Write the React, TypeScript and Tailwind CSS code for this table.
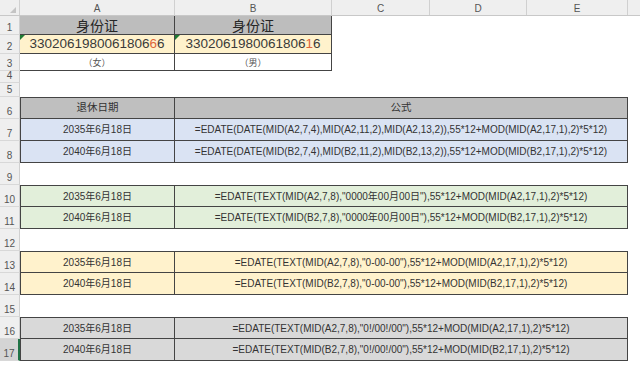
const formulas = [
  {
    bg: "bg-[#dae3f3]",
    rows: [
      { n: 7, date: "2035年6月18日", f: "=EDATE(DATE(MID(A2,7,4),MID(A2,11,2),MID(A2,13,2)),55*12+MOD(MID(A2,17,1),2)*5*12)" },
      { n: 8, date: "2040年6月18日", f: "=EDATE(DATE(MID(B2,7,4),MID(B2,11,2),MID(B2,13,2)),55*12+MOD(MID(B2,17,1),2)*5*12)" },
    ],
  },
  {
    bg: "bg-[#e2efda]",
    rows: [
      { n: 10, date: "2035年6月18日", f: '=EDATE(TEXT(MID(A2,7,8),"0000年00月00日"),55*12+MOD(MID(A2,17,1),2)*5*12)' },
      { n: 11, date: "2040年6月18日", f: '=EDATE(TEXT(MID(B2,7,8),"0000年00月00日"),55*12+MOD(MID(B2,17,1),2)*5*12)' },
    ],
  },
  {
    bg: "bg-[#fff2cc]",
    rows: [
      { n: 13, date: "2035年6月18日", f: '=EDATE(TEXT(MID(A2,7,8),"0-00-00"),55*12+MOD(MID(A2,17,1),2)*5*12)' },
      { n: 14, date: "2040年6月18日", f: '=EDATE(TEXT(MID(B2,7,8),"0-00-00"),55*12+MOD(MID(B2,17,1),2)*5*12)' },
    ],
  },
  {
    bg: "bg-[#d9d9d9]",
    rows: [
      { n: 16, date: "2035年6月18日", f: '=EDATE(TEXT(MID(A2,7,8),"0!/00!/00"),55*12+MOD(MID(A2,17,1),2)*5*12)' },
      { n: 17, date: "2040年6月18日", f: '=EDATE(TEXT(MID(B2,7,8),"0!/00!/00"),55*12+MOD(MID(B2,17,1),2)*5*12)' },
    ],
  },
];

const RowNum = ({ n, active }: { n: number; active?: boolean }) => (
  <div
    className={
      "w-[20px] shrink-0 flex items-end justify-center pb-[1px] leading-none text-[10px] text-[#555] border-b border-[#d8d8d8] " +
      (active ? "bg-[#d4d4d4] border-r-2 border-r-[#217346]" : "bg-[#efefef] border-r border-r-[#d0d0d0]")
    }
  >
    {n}
  </div>
);

const IdNumber = ({ head, hl, tail }: { head: string; hl: string; tail: string }) => (
  <span>
    {head}
    <span className="text-[#e0663a]">{hl}</span>
    {tail}
  </span>
);

const Spacer = ({ n, h }: { n: number; h: string }) => (
  <div className={"flex " + h}>
    <RowNum n={n} />
    <div className="flex-1" />
  </div>
);

export default function App() {
  const gaps = [9, 12, 15];
  return (
    <div className="w-[640px] h-[365px] overflow-hidden bg-white text-[#333] font-['Liberation_Sans','Noto_Sans_CJK_SC',sans-serif]">
      {/* column headers */}
      <div className="flex h-[16px] bg-[#efefef] border-b border-[#c8c8c8] text-[10px] text-[#555] leading-none">
        <div className="w-[20px] shrink-0 border-r border-[#d0d0d0] relative">
          <div className="absolute right-[3px] bottom-[2px] w-0 h-0 border-l-[6px] border-l-transparent border-b-[6px] border-b-[#c4c4c4]" />
        </div>
        {[
          ["A", "w-[155px]"],
          ["B", "w-[157px]"],
          ["C", "w-[98px]"],
          ["D", "w-[97px]"],
          ["E", "w-[101px]"],
        ].map(([l, w]) => (
          <div key={l} className={w + " shrink-0 border-r border-[#d0d0d0] flex items-center justify-center pt-[2px]"}>
            {l}
          </div>
        ))}
        <div className="flex-1" />
      </div>

      {/* rows 1-3 */}
      <div className="flex h-[19px]">
        <RowNum n={1} />
        <div className="w-[155px] shrink-0 bg-[#bdbdbd] border-r border-b border-[#444] flex items-center justify-center text-[14px] text-[#262626] font-['Noto_Sans_CJK_SC',sans-serif]">
          身份证
        </div>
        <div className="w-[157px] shrink-0 bg-[#bdbdbd] border-r border-b border-[#444] flex items-center justify-center text-[14px] text-[#262626] font-['Noto_Sans_CJK_SC',sans-serif]">
          身份证
        </div>
      </div>
      <div className="flex h-[19px]">
        <RowNum n={2} />
        <div className="relative w-[155px] shrink-0 bg-[#fff2cc] border-r border-b border-[#444] flex items-center justify-center text-[13.5px] text-[#3a3a3a]">
          <div className="absolute left-0 top-0 w-0 h-0 border-t-[5px] border-t-[#1e7b34] border-r-[5px] border-r-transparent" />
          <IdNumber head="3302061980061806" hl="6" tail="6" />
        </div>
        <div className="relative w-[157px] shrink-0 bg-[#fff2cc] border-r border-b border-[#444] flex items-center justify-center text-[13.5px] text-[#3a3a3a]">
          <div className="absolute left-0 top-0 w-0 h-0 border-t-[5px] border-t-[#1e7b34] border-r-[5px] border-r-transparent" />
          <IdNumber head="3302061980061806" hl="1" tail="6" />
        </div>
      </div>
      <div className="flex h-[17px]">
        <RowNum n={3} />
        <div className="w-[155px] shrink-0 border-r border-b border-[#444] flex items-end justify-center text-[9px] text-[#555] leading-[14px]">
          （女）
        </div>
        <div className="w-[157px] shrink-0 border-r border-b border-[#444] flex items-end justify-center text-[9px] text-[#555] leading-[14px]">
          （男）
        </div>
      </div>
      <Spacer n={4} h="h-[12px]" />
      <Spacer n={5} h="h-[14px]" />

      {/* header row 6 */}
      <div className="flex h-[22px]">
        <RowNum n={6} />
        <div className="w-[155px] shrink-0 bg-[#bfbfbf] border border-[#444] flex items-center justify-center text-[10.5px] text-[#333]">
          退休日期
        </div>
        <div className="w-[453px] shrink-0 bg-[#bfbfbf] border-y border-r border-[#444] flex items-center justify-center text-[10.5px] text-[#333]">
          公式
        </div>
      </div>

      {formulas.map((block, bi) => (
        <div key={bi}>
          {bi > 0 && <Spacer n={gaps[bi - 1]} h="h-[22px]" />}
          {block.rows.map((r, ri) => (
            <div key={r.n} className="flex h-[22px]">
              <RowNum n={r.n} active={r.n === 17} />
              <div
                className={
                  "w-[155px] shrink-0 border-l border-r border-b border-[#444] flex items-center justify-center text-[10px] text-[#333] " +
                  block.bg +
                  (ri === 0 && bi > 0 ? " border-t" : "")
                }
              >
                {r.date}
              </div>
              <div
                className={
                  "w-[453px] shrink-0 border-r border-b border-[#444] flex items-center justify-center text-[10px] text-[#333] whitespace-nowrap " +
                  block.bg +
                  (ri === 0 && bi > 0 ? " border-t" : "")
                }
              >
                {r.f}
              </div>
            </div>
          ))}
        </div>
      ))}
    </div>
  );
}
